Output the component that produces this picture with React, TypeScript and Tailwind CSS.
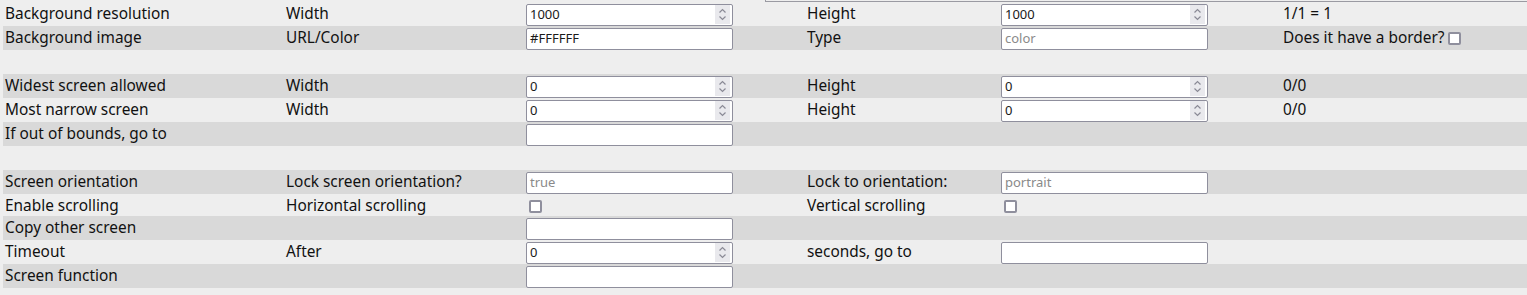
import React from "react";

type Cell =
  | { kind: "text"; value: string }
  | { kind: "input"; value?: string; placeholder?: string }
  | { kind: "number"; value: string }
  | { kind: "check"; label?: string }
  | { kind: "empty" };

type Row = { cells: Cell[]; short?: boolean } | null;

const t = (value: string): Cell => ({ kind: "text", value });
const e: Cell = { kind: "empty" };

const rows: Row[] = [
  {
    cells: [t("Background resolution"), t("Width"), { kind: "number", value: "1000" }, t("Height"), { kind: "number", value: "1000" }, t("1/1 = 1")],
  },
  {
    cells: [t("Background image"), t("URL/Color"), { kind: "input", value: "#FFFFFF" }, t("Type"), { kind: "input", placeholder: "color" }, { kind: "check", label: "Does it have a border?" }],
  },
  null,
  {
    cells: [t("Widest screen allowed"), t("Width"), { kind: "number", value: "0" }, t("Height"), { kind: "number", value: "0" }, t("0/0")],
  },
  {
    cells: [t("Most narrow screen"), t("Width"), { kind: "number", value: "0" }, t("Height"), { kind: "number", value: "0" }, t("0/0")],
  },
  { cells: [t("If out of bounds, go to"), e, { kind: "input" }, e, e, e] },
  null,
  {
    cells: [t("Screen orientation"), t("Lock screen orientation?"), { kind: "input", placeholder: "true" }, t("Lock to orientation:"), { kind: "input", placeholder: "portrait" }, e],
  },
  {
    short: true,
    cells: [t("Enable scrolling"), t("Horizontal scrolling"), { kind: "check" }, t("Vertical scrolling"), { kind: "check" }, e],
  },
  { cells: [t("Copy other screen"), e, { kind: "input" }, e, e, e] },
  {
    cells: [t("Timeout"), t("After"), { kind: "number", value: "0" }, t("seconds, go to"), { kind: "input" }, e],
  },
  { cells: [t("Screen function"), e, { kind: "input" }, e, e, e] },
];

function Spinner() {
  return (
    <div className="flex h-[19px] w-[15px] items-center justify-center bg-[#e9e9ed]">
      <svg width="9" height="15" viewBox="0 0 9 15" fill="none" stroke="#8a8a96" strokeWidth="1.2">
        <path d="M1.5 5.5 L4.5 2.5 L7.5 5.5" />
        <path d="M1.5 9.5 L4.5 12.5 L7.5 9.5" />
      </svg>
    </div>
  );
}

function Box() {
  return <span className="block h-[13px] w-[13px] rounded-[2px] border-2 border-[#8f8f9d] bg-white" />;
}

function CellView({ cell }: { cell: Cell }) {
  switch (cell.kind) {
    case "text":
      return <span className="whitespace-nowrap pb-[2px]">{cell.value}</span>;
    case "empty":
      return null;
    case "check":
      return (
        <span className="flex items-center gap-[4px] whitespace-nowrap">
          {cell.label && <span className="pb-[2px]">{cell.label}</span>}
          <span className={cell.label ? "" : "ml-[3px]"}>
            <Box />
          </span>
        </span>
      );
    case "input":
      return (
        <div className="flex h-[22px] w-[207px] items-center rounded-[2px] border border-[#8f8f9d] bg-white px-[3px] text-[13px]">
          {cell.value ? (
            <span className="text-[#1a1a1a]">{cell.value}</span>
          ) : cell.placeholder ? (
            <span className="text-[#8a8a8a]">{cell.placeholder}</span>
          ) : null}
        </div>
      );
    case "number":
      return (
        <div className="flex h-[22px] w-[207px] items-center justify-between rounded-[2px] border border-[#8f8f9d] bg-white pl-[3px] pr-[2px] text-[13px]">
          <span className="text-[#1a1a1a]">{cell.value}</span>
          <Spinner />
        </div>
      );
  }
}

export default function App() {
  return (
    <div className="h-[295px] w-[1527px] overflow-hidden bg-[#eeeeee] text-[15.4px] text-[#111111]" style={{ fontFamily: '"Noto Sans", "Open Sans", sans-serif' }}>
      {/* top edge of the panel above */}
      <div className="h-[2px]">
        <div className="ml-[765px] h-[2px] border-b border-l border-[#9a9aa2]" />
      </div>

      <div className="ml-[3px]">
        {rows.map((row, i) =>
          row === null ? (
            <div key={i} className={`h-[24px] ${i % 2 === 1 ? "bg-[#d9d9d9]" : ""}`} />
          ) : (
            <div
              key={i}
              className={`grid grid-cols-[283px_240px_281px_194px_282px_1fr] items-center ${row.short ? "h-[22px]" : "h-[24px]"} ${i % 2 === 1 ? "bg-[#d9d9d9]" : ""}`}
            >
              {row.cells.map((c, j) => (
                <div key={j} className={`flex items-center ${j === 0 ? "pl-[2px]" : ""}`}>
                  <CellView cell={c} />
                </div>
              ))}
            </div>
          )
        )}
      </div>
    </div>
  );
}
